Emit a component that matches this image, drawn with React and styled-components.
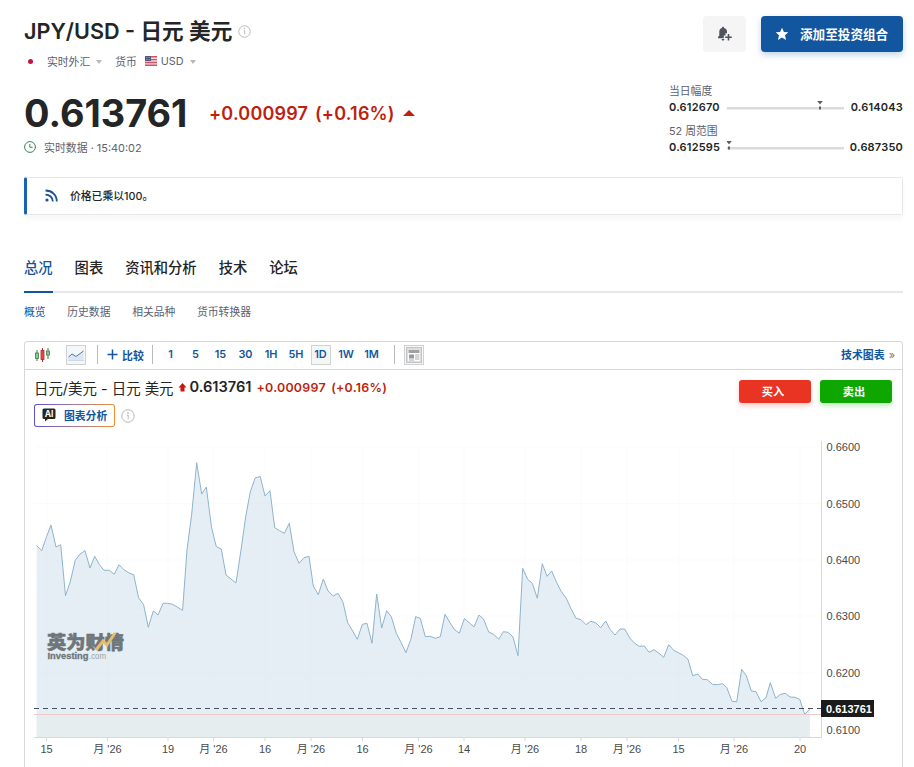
import styled, { createGlobalStyle } from 'styled-components';

const GlobalStyle = createGlobalStyle`
  * {
    box-sizing: border-box;
  }

  body {
    margin: 0;
    background-color: #ffffff;
    color: #232526;
    font-family: Inter, "Noto Sans CJK SC", sans-serif;
    overflow: hidden;
  }
`;

const Page = styled.main`
  width: 914px;
  height: 767px;
  padding: 0 11px 0 24px;
  overflow: hidden;
  display: flex;
  flex-direction: column;
`;

const Header = styled.header`
  display: flex;
  justify-content: space-between;
  height: 177px;
  flex-shrink: 0;
`;

const Summary = styled.div`
  display: flex;
  flex-direction: column;
`;

const TitleRow = styled.div`
  display: flex;
  align-items: center;
  gap: 6px;
  height: 30px;
  margin-top: 16px;
`;

const Title = styled.h1`
  margin: 0;
  font-size: 21.6px;
  line-height: 30px;
  font-weight: 600;
  white-space: nowrap;
`;

const Meta = styled.div`
  display: flex;
  align-items: center;
  height: 16px;
  margin-top: 7px;
  font-size: 10.8px;
  color: #5b616e;
  white-space: nowrap;
`;

const MetaText = styled.span`
  margin-left: ${(props) => props.$left || 0}px;
`;

const Dot = styled.span`
  width: 5px;
  height: 5px;
  margin-left: 4px;
  border-radius: 50%;
  background-color: #c8143c;
`;

const Caret = styled.span`
  width: 0;
  height: 0;
  margin: 2px 0 0 6px;
  border-left: 3.5px solid transparent;
  border-right: 3.5px solid transparent;
  border-top: 4px solid #b5b8bd;
`;

const PriceRow = styled.div`
  display: flex;
  align-items: center;
  height: 44px;
  margin-top: 22px;
  white-space: nowrap;
`;

const Price = styled.span`
  width: 185px;
  font-size: 37.8px;
  line-height: 44px;
  font-weight: 700;
`;

const Change = styled.span`
  font-size: 18px;
  font-weight: 600;
  letter-spacing: 0.2px;
  word-spacing: 2px;
  color: #c01f0f;
`;

const UpArrow = styled.span`
  margin-left: 8px;
  border-left: 6px solid transparent;
  border-right: 6px solid transparent;
  border-bottom: 6px solid #c01f0f;
`;

const Updated = styled(Meta)`
  gap: 8px;
  margin-top: 4px;
  font-size: 10.9px;
`;

const Aside = styled.div`
  width: 234px;
  display: flex;
  flex-direction: column;
  padding-top: 16px;
`;

const Actions = styled.div`
  display: flex;
  justify-content: flex-end;
  gap: 15px;
  height: 36px;
`;

const AlertButton = styled.button`
  display: flex;
  align-items: center;
  justify-content: center;
  width: 43px;
  border: 0;
  border-radius: 4px;
  background-color: #f5f5f5;
`;

const PortfolioButton = styled.button`
  display: flex;
  align-items: center;
  gap: 11px;
  width: 142px;
  padding: 0 0 1px 14px;
  border: 0;
  border-radius: 4px;
  background-color: #1256a0;
  box-shadow: 0 3px 6px rgba(18, 86, 160, 0.25);
  color: #ffffff;
  font: 600 12.6px Inter, "Noto Sans CJK SC", sans-serif;
  white-space: nowrap;
`;

const RangeBlock = styled.div`
  height: 40px;
`;

const RangeList = styled.div`
  margin-top: 32px;
`;

const RangeLabel = styled.div`
  font-size: 10.8px;
  line-height: 15px;
  color: #5b616e;
`;

const RangeRow = styled.div`
  display: flex;
  align-items: center;
  justify-content: space-between;
  height: 16px;
  font-size: 11px;
  font-weight: 600;
  letter-spacing: 0.2px;
`;

const Notice = styled.section`
  display: flex;
  align-items: center;
  gap: 12px;
  height: 38px;
  flex-shrink: 0;
  padding: 0 0 1px 18px;
  border: 1px solid #e6e9eb;
  border-left: 3px solid #1c63b7;
  border-radius: 2px;
  box-shadow: 0 5px 5px rgba(0, 0, 0, 0.03);
  font-size: 10.8px;
  font-weight: 500;
`;

const NoticeText = styled.span`
  margin-bottom: 2px;
`;

const Tabs = styled.nav`
  display: flex;
  gap: 22px;
  height: 40px;
  margin-top: 38px;
  flex-shrink: 0;
  border-bottom: 2px solid #e6e9eb;
`;

const Tab = styled.a`
  height: 40px;
  padding-top: 5px;
  border-bottom: 2px solid ${(props) => (props.$active ? '#1256a0' : 'transparent')};
  color: ${(props) => (props.$active ? '#1256a0' : '#232526')};
  font-size: 14.3px;
  line-height: 20px;
  font-weight: 500;
`;

const SubTabs = styled.nav`
  display: flex;
  align-items: center;
  gap: 21.7px;
  height: 36px;
  padding-bottom: 1px;
  flex-shrink: 0;
`;

const SubTab = styled.a`
  font-size: 10.8px;
  color: ${(props) => (props.$active ? '#1256a0' : '#5b616e')};
`;

const Panel = styled.section`
  display: flex;
  flex-direction: column;
  height: 440px;
  margin-top: 12px;
  flex-shrink: 0;
  border: 1px solid #d4d8da;
  border-radius: 3px 3px 0 0;
`;

const Toolbar = styled.div`
  display: flex;
  align-items: center;
  height: 28px;
  flex-shrink: 0;
  padding: 0 7px 2px 9px;
  border-bottom: 1px solid #d4d8da;
  color: #1256a0;
  font-size: 10.9px;
  font-weight: 600;
  white-space: nowrap;
`;

const IconBox = styled.span`
  display: flex;
  align-items: center;
  justify-content: center;
  width: 20px;
  height: 20px;
  margin-left: ${(props) => props.$left}px;
  border: 1px solid #cfd2d4;
  background-color: #f4f6f7;
`;

const Divider = styled.span`
  width: 1px;
  height: 19px;
  margin-left: ${(props) => props.$left}px;
  background-color: #b9bcbe;
`;

const Compare = styled.span`
  display: flex;
  align-items: center;
  gap: 4px;
  width: 37px;
  margin: 0 8px 0 9px;
`;

const Intervals = styled.div`
  display: grid;
  grid-template-columns: 25px 25px 25px 25px 26px 24px 25px 26px 25px;
  margin-left: 5px;
  height: 20px;
`;

const Interval = styled.span`
  justify-self: center;
  width: 20px;
  line-height: 17px;
  text-align: center;
  border: 1px solid ${(props) => (props.$active ? '#d0d3d5' : 'transparent')};
  background-color: ${(props) => (props.$active ? '#f5f6f6' : 'transparent')};
`;

const TechLink = styled.a`
  margin: 0 0 1px auto;
`;

const Chevrons = styled.span`
  margin-left: 4px;
  color: #6f7680;
  font-weight: 400;
`;

const ChartHead = styled.div`
  display: flex;
  justify-content: space-between;
  height: 65px;
  flex-shrink: 0;
  padding: 7px 10px 0 9px;
`;

const ChartTitle = styled.div`
  display: flex;
  align-items: center;
  height: 20px;
  font-size: 14.45px;
  white-space: nowrap;
`;

const Last = styled.span`
  margin-left: 3px;
  font-size: 14.6px;
  font-weight: 600;
`;

const LastChange = styled.span`
  margin-left: 5px;
  color: #c01f0f;
  font-size: 12.4px;
  font-weight: 600;
  letter-spacing: 0.25px;
  word-spacing: 2px;
`;

const AiRow = styled.div`
  display: flex;
  align-items: center;
  gap: 6px;
  margin-top: 7px;
`;

const AiButton = styled.span`
  display: flex;
  align-items: center;
  gap: 8px;
  width: 81px;
  height: 23px;
  padding: 0 0 2px 7px;
  border: 1px solid transparent;
  border-radius: 3px;
  background: linear-gradient(#ffffff, #ffffff) padding-box,
    linear-gradient(90deg, #5b4fd0, #a37a9c 50%, #ef8f2f) border-box;
  color: #1256a0;
  font-size: 10.8px;
  font-weight: 600;
  white-space: nowrap;
`;

const TradeButtons = styled.div`
  display: flex;
  gap: 9px;
  padding-top: 3px;
`;

const TradeButton = styled.button`
  width: 72px;
  height: 23px;
  padding: 0 4px 1px 0;
  border: 0;
  border-radius: 3px;
  background-color: ${(props) => props.$color};
  box-shadow: 0 3px 5px ${(props) => props.$glow};
  color: #ffffff;
  font: 700 11.2px "Liberation Sans", "Noto Sans CJK SC", sans-serif;
`;

const ChartSvg = styled.svg`
  display: block;
  width: 877px;
  height: 332px;
  flex-shrink: 0;
  font-family: "Liberation Sans", "Noto Sans CJK SC", sans-serif;
`;

const tabs = ['总况', '图表', '资讯和分析', '技术', '论坛'];
const subTabs = ['概览', '历史数据', '相关品种', '货币转换器'];
const intervals = ['1', '5', '15', '30', '1H', '5H', '1D', '1W', '1M'];

const ranges = [
  { label: '当日幅度', low: '0.612670', high: '0.614043', position: 93 },
  { label: '52 周范围', low: '0.612595', high: '0.687350', position: 2 },
];

const yLabels = [
  ['0.6600', 447], ['0.6500', 503.5], ['0.6400', 560], ['0.6300', 616],
  ['0.6200', 673], ['0.6100', 729.5],
];

const xLabels = [
  ['15', 46.5], ["月 '26", 107.5], ['19', 168], ["月 '26", 213.5], ['16', 265],
  ["月 '26", 311], ['16', 362.5], ["月 '26", 418.5], ['14', 464], ["月 '26", 525],
  ['18', 581], ["月 '26", 627], ['15', 678.5], ["月 '26", 734], ['20', 800],
];

const points = [
  [36.7, 545.7], [41.7, 550.7], [46.5, 536.7], [51, 525], [56, 547], [60.7, 544.7],
  [65.5, 595.7], [70.2, 582], [75.2, 560.5], [80, 554], [85, 550.7], [90, 568],
  [94.7, 556.3], [99.5, 564.7], [104, 570.3], [109.3, 570.3], [114.3, 574.3],
  [119, 564.7], [124, 569.7], [129, 573], [133.7, 574.7], [138.6, 597.7],
  [143.6, 604.7], [148.3, 627.3], [153.3, 611], [158, 615], [163, 603.3],
  [167.7, 603.3], [172.7, 604.3], [177.6, 607.3], [182.6, 610.3], [187, 550],
  [191.7, 514], [196.7, 462.7], [201.7, 494], [206.3, 487], [211.6, 527.7],
  [216.3, 546.7], [221.3, 549], [226, 575], [231, 579], [236, 583], [241, 550],
  [245.7, 516.7], [250.3, 491.7], [255.3, 477.7], [260.3, 476.7], [265, 496],
  [270, 490.7], [274.7, 527.7], [279.6, 530.7], [284.3, 533.3], [289.3, 523.3],
  [294, 551.7], [299, 563.3], [304, 557.7], [309, 556.3], [313.3, 586],
  [318.3, 594.7], [323.3, 579], [328, 591], [333.3, 596], [338, 593.3],
  [343, 602.3], [347.7, 622.7], [352.7, 631], [357.3, 639.3], [362.3, 624.3],
  [367, 623.3], [372, 643.3], [376.7, 594], [381.7, 628], [386.7, 610.7],
  [391.3, 616.7], [396.3, 633.3], [401, 642.3], [406, 652.7], [411, 638.7],
  [415.7, 616.7], [420.3, 618.3], [425.3, 636.7], [430.3, 636.3], [435.3, 638.3],
  [440.3, 636.7], [445, 614.3], [450, 622.7], [454.3, 629.3], [459.3, 633.3],
  [464.3, 618.7], [469.3, 622.7], [474, 627], [479, 615], [483.7, 619.3],
  [488.7, 632], [493.7, 634.3], [498.7, 639.3], [503.3, 631.7], [508, 632.3],
  [513, 637], [518, 655.7], [522.7, 568.3], [527.7, 579.3], [532.3, 583.3],
  [537.3, 598.3], [542.3, 563.7], [547, 576.3], [551.7, 571], [556.7, 582.7],
  [561.3, 591.7], [566.3, 598.3], [571, 608.7], [576, 618.3], [581, 619.7],
  [586, 624.7], [590.7, 621.3], [595.7, 622.7], [600.7, 627.7], [605.7, 621],
  [610.3, 629.7], [615, 635], [620, 629], [624.7, 629], [629.7, 638],
  [634.7, 643.3], [639.3, 646.3], [644.3, 646], [649, 652.3], [654, 649.7],
  [659, 653.3], [663.7, 657.3], [668.7, 644.7], [673.7, 650.3], [678.3, 652.7],
  [683.3, 655.3], [688, 659.3], [692.7, 675.7], [697.7, 674], [702.3, 679.3],
  [707.3, 679.7], [712.3, 684.3], [717.3, 684.7], [722.3, 683.7], [726.7, 687.3],
  [732, 701.3], [736.7, 701.7], [741.7, 669.3], [746.3, 675.7], [751.3, 691],
  [756, 691.7], [761, 701.7], [766, 697.7], [770.3, 682.7], [775.7, 698.3],
  [780.3, 694.3], [785.3, 693.3], [790, 697], [795, 697.3], [799.7, 699.3],
  [804.7, 714.3], [809.7, 709],
];

function InfoIcon({ size }) {
  return (
    <svg width={size} height={size} viewBox="0 0 14 14" fill="none" stroke="#b3b6ba">
      <circle cx="7" cy="7" r="6.2" />
      <path d="M6 6.2H7.2V10" />
      <circle cx="7" cy="4" r="0.4" fill="#b3b6ba" />
    </svg>
  );
}

function FlagIcon() {
  return (
    <svg width="12" height="10" viewBox="0 0 12 10" style={{ marginLeft: 8 }}>
      <rect width="12" height="10" fill="#f6dfe2" />
      <path d="M0 .7h12M0 3.6h12M0 6.5h12M0 9.3h12" stroke="#d04f60" strokeWidth="1.4" />
      <rect width="6" height="5" fill="#54577f" />
      <path d="M1 1.5h4M1 3.5h4" stroke="#a9abc5" strokeWidth=".6" strokeDasharray="1 .6" />
    </svg>
  );
}

function ClockIcon() {
  return (
    <svg width="12" height="12" viewBox="0 0 12 12" fill="none" stroke="#2f8a56">
      <circle cx="6" cy="6" r="5.4" />
      <path d="M5.8 3V6.3H8.6" />
    </svg>
  );
}

function BellPlusIcon() {
  return (
    <svg width="16" height="16" viewBox="0 0 16 16" fill="#4f545c">
      <path d="M6 .8c.7 0 1 .5 1 1.1C9.2 2.4 10 4 10 5.800V7.300H8.500V9.500H6.800V12.200H1V11L2.300 9.500V5.800C2.300 4 3 2.400 5 1.900 5 1.300 5.300.8 6 .8ZM4.600 13H7.400C7.400 15 4.600 15 4.600 13Z" />
      <path d="M11.500 8v6.600M8.200 11.300h6.600" stroke="#4f545c" strokeWidth="1.6" />
    </svg>
  );
}

function StarIcon() {
  return (
    <svg width="14" height="14" viewBox="0 0 14 14" fill="#ffffff">
      <path d="M7 .8 8.9 4.9 13.3 5.3 10 8.3 11 12.900 7 10.500 3 12.900 4 8.300.7 5.300 5.100 4.900Z" />
    </svg>
  );
}

function FeedIcon() {
  return (
    <svg width="13" height="13" viewBox="0 0 13 13" fill="none" stroke="#1f4f94" strokeWidth="1.8">
      <path d="M.5 1.5C7 1.5 11.8 6 11.8 12.5M.5 5.6C4.5 5.6 7.8 8.3 7.8 12.5" />
      <circle cx="2" cy="11" r="1.6" fill="#1f4f94" stroke="none" />
    </svg>
  );
}

function CandlesIcon() {
  return (
    <svg width="17" height="16" viewBox="0 0 17 16">
      <path d="M3 3v11M14 1v11" stroke="#3b7d45" />
      <path d="M8.5 1v14" stroke="#b3262b" />
      <rect x="1.5" y="6" width="3" height="5.5" fill="#8fc898" stroke="#3b7d45" strokeWidth=".8" />
      <rect x="7" y="3.5" width="3" height="9" fill="#e5484d" stroke="#b3262b" strokeWidth=".8" />
      <rect x="12.5" y="4" width="3" height="4" fill="#8fc898" stroke="#3b7d45" strokeWidth=".8" />
    </svg>
  );
}

function AreaIcon() {
  return (
    <svg width="16" height="14" viewBox="0 0 16 14">
      <path d="M0 9 4 5.500 8 8 15.500 3V12H0Z" fill="#dbe6f1" />
      <path d="M.5 9 4 6 8 8.500 15.500 3" fill="none" stroke="#557ba3" />
      <path d="M0 12.500h16" stroke="#ccd8e4" />
    </svg>
  );
}

function NewsIcon() {
  return (
    <svg width="16" height="16" viewBox="0 0 16 16">
      <rect x=".5" y=".5" width="15" height="15" fill="#dedede" stroke="#c4c4c4" />
      <rect x="2" y="3" width="12" height="11" fill="#ffffff" />
      <rect x="2.5" y="3" width="11" height="3" fill="#a2a2a2" />
      <rect x="3" y="7.5" width="5" height="4" fill="#999999" />
      <path d="M9 8h4.500M9 10h4.500M9 12h4.500M3 13h5" stroke="#aaaaaa" />
    </svg>
  );
}

function UpIcon() {
  return (
    <svg width="9" height="9" viewBox="0 0 8 9" fill="#c9170c" style={{ marginLeft: 4 }}>
      <path d="M4 0 8 4.500H6V8.500H2V4.500H0Z" />
    </svg>
  );
}

function AiIcon() {
  return (
    <svg width="14" height="14" viewBox="0 0 14 14">
      <path d="M2 .5H12Q13.500.5 13.500 2V9.500Q13.500 11 12 11H6L3 13.500V11H2Q.5 11 .5 9.500V2Q.5.5 2 .5Z" fill="#232526" />
      <text x="7" y="9" textAnchor="middle" fontSize="8.5" fontWeight="700" fill="#ffffff">AI</text>
    </svg>
  );
}

function RangeBar({ position }) {
  return (
    <svg width="117" height="14" viewBox="0 0 117 14">
      <rect x="0" y="7" width="117" height="2.5" fill="#dadbdc" />
      <path d={`M${position - 2.8} 1H${position + 2.8}L${position} 4.500Z`} fill="#5b5f64" />
      <rect x={position - 1} y="6.5" width="2" height="3" fill="#5b5f64" />
    </svg>
  );
}

function Chart() {
  const line = points.map((point) => point.join(',')).join(' L');

  return (
    <ChartSvg viewBox="25 435 877 332">
      <g stroke="#fafbfb">
        {yLabels.map(([label, y]) => (
          <path key={label} d={`M35 ${y}H821`} />
        ))}
        {xLabels.map(([label, x]) => (
          <path key={x} d={`M${x} 447V738`} />
        ))}
      </g>
      <path d={`M${line} V737.500 H36.700 Z`} fill="#d3e3ee" fillOpacity="0.6" />
      <rect x="36.7" y="714" width="773" height="23.5" fill="#e8ece9" fillOpacity="0.5" />
      <path d={`M${line}`} fill="none" stroke="#8fb4cb" />
      <path d="M34 714.500H821" stroke="#f0c9cf" />
      <path d="M34 708.500H821" stroke="#46525c" strokeDasharray="5 4" />
      <path d="M821.500 441V738M34 737.500H822" fill="none" stroke="#d5dadd" />
      <g stroke="#d5dadd">
        {xLabels.map(([label, x]) => (
          <path key={x} d={`M${x} 738V741`} />
        ))}
      </g>
      <g fill="#4a4a4a" fontSize="11">
        {yLabels.map(([label, y]) => (
          <text key={label} x="826.5" y={y + 4}>{label}</text>
        ))}
        {xLabels.map(([label, x]) => (
          <text key={x} x={x} y="753" textAnchor="middle">{label}</text>
        ))}
      </g>
      <rect x="821" y="700" width="53" height="17" fill="#1b1b1b" />
      <text x="826" y="712.5" fontSize="11" fontWeight="700" fill="#ffffff">0.613761</text>
      <text x="47" y="648.5" fontSize="18.5" fontWeight="900" fill="#6f7679" stroke="#6f7679" strokeWidth=".5" textLength="77" lengthAdjust="spacingAndGlyphs">英为财情</text>
      <path d="M96 650 103 641 107 645 115 633" fill="none" stroke="#e8bd68" strokeWidth="3" />
      <text x="47.5" y="658.5" fontSize="9" fontWeight="700" fill="#6f7679" stroke="#6f7679" strokeWidth=".3" textLength="41" lengthAdjust="spacingAndGlyphs">Investing</text>
      <text x="89" y="658.5" fontSize="9" fill="#9a9fa2" textLength="17" lengthAdjust="spacingAndGlyphs">.com</text>
    </ChartSvg>
  );
}

function App() {
  return (
    <>
      <GlobalStyle />
      <Page>
        <Header>
          <Summary>
            <TitleRow>
              <Title>JPY/USD - 日元 美元</Title>
              <InfoIcon size={13} />
            </TitleRow>
            <Meta>
              <Dot />
              <MetaText $left={14}>实时外汇</MetaText>
              <Caret />
              <MetaText $left={13}>货币</MetaText>
              <FlagIcon />
              <MetaText $left={4}>USD</MetaText>
              <Caret />
            </Meta>
            <PriceRow>
              <Price>0.613761</Price>
              <Change>+0.000997 (+0.16%)</Change>
              <UpArrow />
            </PriceRow>
            <Updated>
              <ClockIcon />
              <span>实时数据 · 15:40:02</span>
            </Updated>
          </Summary>
          <Aside>
            <Actions>
              <AlertButton>
                <BellPlusIcon />
              </AlertButton>
              <PortfolioButton>
                <StarIcon />
                添加至投资组合
              </PortfolioButton>
            </Actions>
            <RangeList>
              {ranges.map((range) => (
                <RangeBlock key={range.label}>
                  <RangeLabel>{range.label}</RangeLabel>
                  <RangeRow>
                    <span>{range.low}</span>
                    <RangeBar position={range.position} />
                    <span>{range.high}</span>
                  </RangeRow>
                </RangeBlock>
              ))}
            </RangeList>
          </Aside>
        </Header>
        <Notice>
          <FeedIcon />
          <NoticeText>价格已乘以100。</NoticeText>
        </Notice>
        <Tabs>
          {tabs.map((tab, index) => (
            <Tab key={tab} $active={index === 0}>{tab}</Tab>
          ))}
        </Tabs>
        <SubTabs>
          {subTabs.map((tab, index) => (
            <SubTab key={tab} $active={index === 0}>{tab}</SubTab>
          ))}
        </SubTabs>
        <Panel>
          <Toolbar>
            <CandlesIcon />
            <IconBox $left={15}>
              <AreaIcon />
            </IconBox>
            <Divider $left={11} />
            <Compare>
              <svg width="11" height="11" viewBox="0 0 11 11" stroke="#1256a0" strokeWidth="1.5">
                <path d="M5.500.5v10M.5 5.500h10" />
              </svg>
              比较
            </Compare>
            <Divider $left={0} />
            <Intervals>
              {intervals.map((interval) => (
                <Interval key={interval} $active={interval === '1D'}>{interval}</Interval>
              ))}
            </Intervals>
            <Divider $left={10} />
            <IconBox $left={9}>
              <NewsIcon />
            </IconBox>
            <TechLink>
              技术图表
              <Chevrons>»</Chevrons>
            </TechLink>
          </Toolbar>
          <ChartHead>
            <div>
              <ChartTitle>
                日元/美元 - 日元 美元
                <UpIcon />
                <Last>0.613761</Last>
                <LastChange>+0.000997 (+0.16%)</LastChange>
              </ChartTitle>
              <AiRow>
                <AiButton>
                  <AiIcon />
                  图表分析
                </AiButton>
                <InfoIcon size={14} />
              </AiRow>
            </div>
            <TradeButtons>
              <TradeButton $color="#e93323" $glow="rgba(233, 51, 35, 0.25)">买入</TradeButton>
              <TradeButton $color="#0ea600" $glow="rgba(14, 166, 0, 0.25)">卖出</TradeButton>
            </TradeButtons>
          </ChartHead>
          <Chart />
        </Panel>
      </Page>
    </>
  );
}

export default App;
